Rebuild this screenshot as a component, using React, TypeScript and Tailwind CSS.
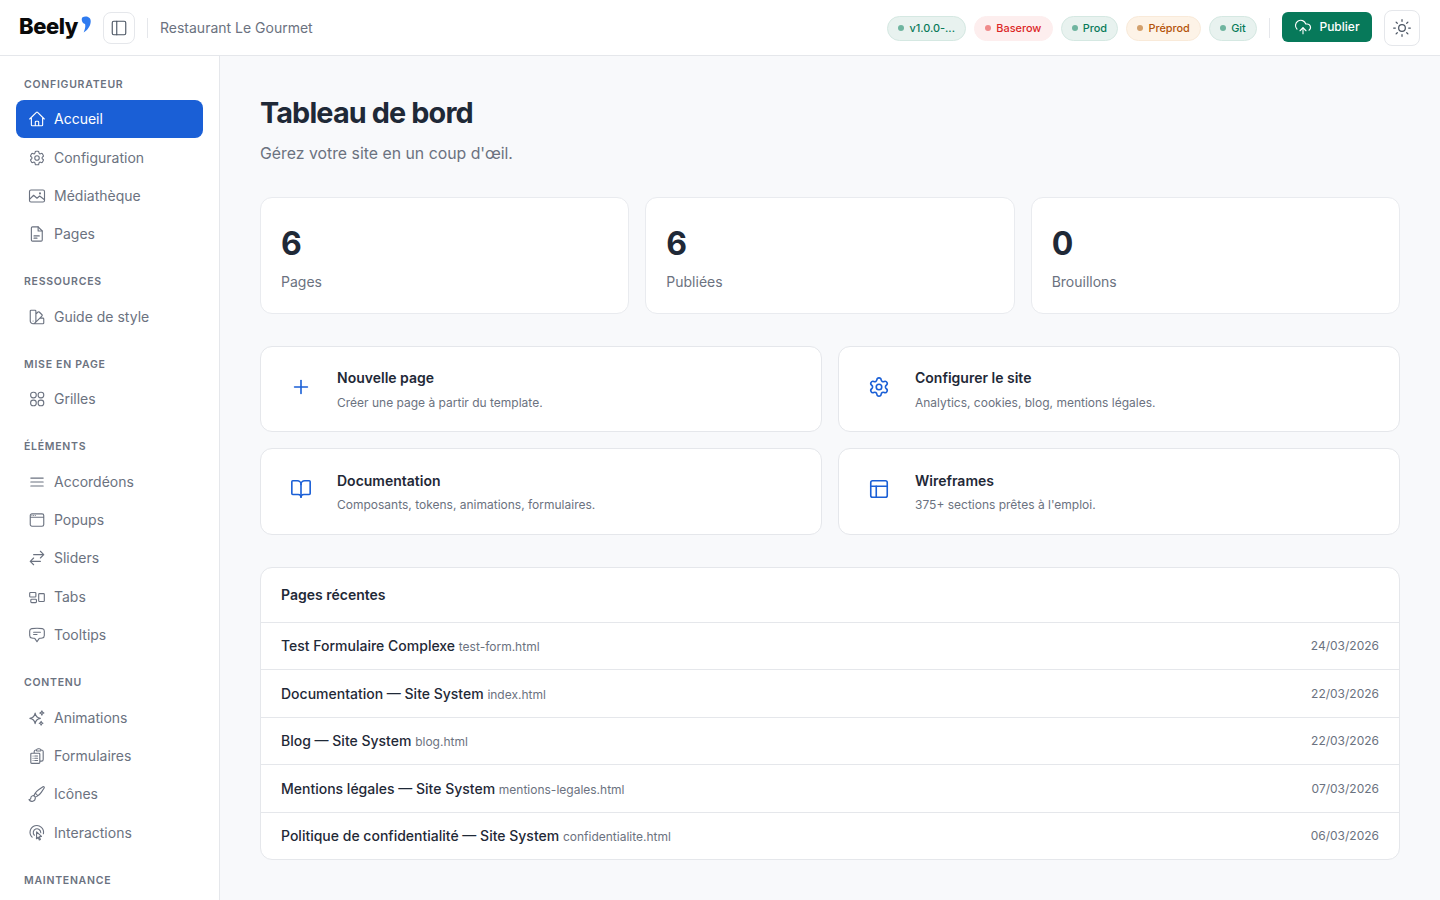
import type { ComponentType, ReactNode } from 'react'
import { BookOpen, CloudUpload, PanelLeft, PanelsTopLeft, Plus, Settings, Sun } from 'lucide-react'
import {
  HiOutlineArrowsRightLeft,
  HiOutlineBars3,
  HiOutlineChatBubbleBottomCenterText,
  HiOutlineClipboardDocumentList,
  HiOutlineCog6Tooth,
  HiOutlineHome,
  HiOutlinePaintBrush,
  HiOutlineRectangleGroup,
  HiOutlineSwatch,
  HiOutlineWindow,
} from 'react-icons/hi2'

type IconType = ComponentType<{ className?: string; strokeWidth?: number }>

const Stroke = ({ className, children }: { className?: string; children: ReactNode }) => (
  <svg viewBox="0 0 24 24" fill="none" stroke="currentColor" strokeWidth={1.5} strokeLinecap="round" strokeLinejoin="round" className={className}>
    {children}
  </svg>
)

const ImageIcon: IconType = ({ className }) => (
  <Stroke className={className}>
    <rect x="2" y="4" width="20" height="16" rx="2" />
    <path d="M2 16.5l5.5-5.5 4.5 4 3.5-3 6.5 5" />
    <circle cx="16" cy="8.5" r="0.6" />
  </Stroke>
)

const PageIcon: IconType = ({ className }) => (
  <Stroke className={className}>
    <path d="M6 2.5h7.5l5.5 5.5v12a1.5 1.5 0 0 1-1.5 1.5H6A1.5 1.5 0 0 1 4.5 20V4A1.5 1.5 0 0 1 6 2.5Z" />
    <path d="M13.5 2.5V8H19M8 14.5h7M8 17.5h4" />
  </Stroke>
)

const GridIcon: IconType = ({ className }) => (
  <Stroke className={className}>
    <rect x="3.5" y="3" width="7.5" height="7.5" rx="3.4" />
    <rect x="13.5" y="3" width="7.5" height="7.5" rx="3.4" />
    <rect x="3.5" y="13.5" width="7.5" height="7.5" rx="3.4" />
    <rect x="13.5" y="13.5" width="7.5" height="7.5" rx="3.4" />
  </Stroke>
)

const SparkIcon: IconType = ({ className }) => (
  <Stroke className={className}>
    <path d="M9.5 5.5C10.2 10 12 11.8 16.5 12.5 12 13.2 10.2 15 9.5 19.5 8.8 15 7 13.2 2.5 12.5 7 11.8 8.8 10 9.5 5.5Z" />
    <path d="M18.5 2.5c.3 1.8 1 2.5 2.8 2.8-1.8.3-2.5 1-2.8 2.8-.3-1.8-1-2.5-2.8-2.8 1.8-.3 2.5-1 2.8-2.8Z" />
    <path d="M17.5 16.5c.3 1.6.9 2.2 2.5 2.5-1.6.3-2.2.9-2.5 2.5-.3-1.6-.9-2.2-2.5-2.5 1.6-.3 2.2-.9 2.5-2.5Z" />
  </Stroke>
)

const TouchIcon: IconType = ({ className }) => (
  <Stroke className={className}>
    <path d="M5.5 17.5A9 9 0 1 1 20.5 13" />
    <path d="M8.5 15A5 5 0 1 1 17 11.5" />
    <path d="M11.5 10.5l6.5 6-3 .5 1.5 3.5-1.5.7-1.5-3.5-2.2 2Z" />
  </Stroke>
)

const navSections: { title: string; items: { label: string; icon: IconType; active?: boolean }[] }[] = [
  {
    title: 'Configurateur',
    items: [
      { label: 'Accueil', icon: HiOutlineHome, active: true },
      { label: 'Configuration', icon: HiOutlineCog6Tooth },
      { label: 'Médiathèque', icon: ImageIcon },
      { label: 'Pages', icon: PageIcon },
    ],
  },
  { title: 'Ressources', items: [{ label: 'Guide de style', icon: HiOutlineSwatch }] },
  { title: 'Mise en page', items: [{ label: 'Grilles', icon: GridIcon }] },
  {
    title: 'Éléments',
    items: [
      { label: 'Accordéons', icon: HiOutlineBars3 },
      { label: 'Popups', icon: HiOutlineWindow },
      { label: 'Sliders', icon: HiOutlineArrowsRightLeft },
      { label: 'Tabs', icon: HiOutlineRectangleGroup },
      { label: 'Tooltips', icon: HiOutlineChatBubbleBottomCenterText },
    ],
  },
  {
    title: 'Contenu',
    items: [
      { label: 'Animations', icon: SparkIcon },
      { label: 'Formulaires', icon: HiOutlineClipboardDocumentList },
      { label: 'Icônes', icon: HiOutlinePaintBrush },
      { label: 'Interactions', icon: TouchIcon },
    ],
  },
  { title: 'Maintenance', items: [] },
]

const stats = [
  { value: '6', label: 'Pages' },
  { value: '6', label: 'Publiées' },
  { value: '0', label: 'Brouillons' },
]

const actions: { title: string; text: string; icon: IconType }[] = [
  { title: 'Nouvelle page', text: 'Créer une page à partir du template.', icon: Plus },
  { title: 'Configurer le site', text: 'Analytics, cookies, blog, mentions légales.', icon: Settings },
  { title: 'Documentation', text: 'Composants, tokens, animations, formulaires.', icon: BookOpen },
  { title: 'Wireframes', text: "375+ sections prêtes à l'emploi.", icon: PanelsTopLeft },
]

const recent = [
  { title: 'Test Formulaire Complexe', file: 'test-form.html', date: '24/03/2026' },
  { title: 'Documentation — Site System', file: 'index.html', date: '22/03/2026' },
  { title: 'Blog — Site System', file: 'blog.html', date: '22/03/2026' },
  { title: 'Mentions légales — Site System', file: 'mentions-legales.html', date: '07/03/2026' },
  { title: 'Politique de confidentialité — Site System', file: 'confidentialite.html', date: '06/03/2026' },
]

const Badge = ({ tone, children }: { tone: 'green' | 'red' | 'amber'; children: ReactNode }) => {
  const tones = {
    green: 'bg-[#e8f2ef] border-[#d5e8e2] text-[#087a5a]',
    red: 'bg-[#fdeeee] border-[#fdeeee] text-[#dc2626]',
    amber: 'bg-[#fdf3e7] border-[#f9ead9] text-[#b45309]',
  }
  const dots = { green: 'bg-[#6fb5a0]', red: 'bg-[#f08a8a]', amber: 'bg-[#d3a06c]' }
  return (
    <span className={`flex h-[25px] items-center gap-[5px] rounded-full border px-[10.2px] text-[10.9px] font-medium ${tones[tone]}`}>
      <span className={`h-[6px] w-[6px] rounded-full ${dots[tone]}`} />
      {children}
    </span>
  )
}

const Header = () => (
  <header className="flex h-14 shrink-0 items-center justify-between border-b border-[#e5e7eb] bg-white pl-[19px] pr-5">
    <div className="flex items-center">
      <span className="flex w-[72px] items-center pb-[3px] text-[22px] font-extrabold leading-none tracking-[-0.02em] text-[#0a0a0a]">
        Beely
        <svg viewBox="0 0 10 18" className="mb-1 ml-[3px] h-[17px] w-[10px] shrink-0">
          <path d="M1 1.5C5 -.5 10 1 10 5.5 10 10.5 6.5 15 2.5 17.5 4.2 13.5 4.6 11 4 8.5 1.5 8.5 -.5 4 1 1.5Z" fill="#2f7bf0" />
        </svg>
      </span>
      <button className="ml-3 flex h-8 w-8 items-center justify-center rounded-lg border border-[#e5e7eb] text-[#4b5563]">
        <PanelLeft className="h-[18px] w-[18px]" strokeWidth={1.5} />
      </button>
      <span className="mx-3 h-5 w-px bg-[#e5e7eb]" />
      <span className="text-sm text-[#6b7280]">Restaurant Le Gourmet</span>
    </div>
    <div className="flex items-center">
      <div className="mt-px flex items-center gap-2">
        <Badge tone="green">v1.0.0-...</Badge>
        <Badge tone="red">Baserow</Badge>
        <Badge tone="green">Prod</Badge>
        <Badge tone="amber">Préprod</Badge>
        <Badge tone="green">Git</Badge>
      </div>
      <span className="mx-3 h-5 w-px bg-[#e5e7eb]" />
      <button className="flex h-[30px] w-[90px] -translate-y-px items-center justify-center gap-[7px] rounded-md bg-[#07795a] text-xs font-medium text-white">
        <CloudUpload className="h-[18px] w-[18px]" strokeWidth={1.5} />
        Publier
      </button>
      <button className="ml-3 flex h-9 w-9 items-center justify-center rounded-lg border border-[#e5e7eb] text-[#4b5563]">
        <Sun className="h-5 w-5" strokeWidth={1.5} />
      </button>
    </div>
  </header>
)

const Sidebar = () => (
  <aside className="w-[220px] shrink-0 overflow-hidden border-r border-[#e5e7eb] bg-white px-4 pt-[19.75px]">
    {navSections.map((section) => (
      <div key={section.title} className={`mb-5 ${section.title === 'Contenu' ? 'pt-[0.36px]' : ''}`}>
        <div className="mb-[8.4px] h-4 px-2 text-[10.5px] font-semibold uppercase leading-[18px] tracking-[0.07em] text-[#6b7280]">
          {section.title}
        </div>
        {section.items.map((item) => {
          const Icon = item.icon
          return (
            <div
              key={item.label}
              className={`flex h-[38.25px] items-center gap-2 rounded-lg pl-[12px] text-sm ${
                item.active ? 'bg-[#1a5fd6] text-white' : 'text-[#6b7280]'
              }`}>
              <Icon className="h-[18px] w-[18px] shrink-0" />
              {item.label}
            </div>
          )
        })}
      </div>
    ))}
  </aside>
)

const Dashboard = () => (
  <main className="flex-1 overflow-hidden bg-[#f8f9fb] px-10 pt-10">
    <h1 className="text-[28.8px] font-bold leading-[33px] tracking-[-0.03em] text-[#1f2937]">Tableau de bord</h1>
    <p className="mt-[13px] text-[15.84px] leading-6 text-[#6b7280]">Gérez votre site en un coup d'œil.</p>

    <div className="mt-[31px] grid grid-cols-3 gap-4">
      {stats.map((stat) => (
        <div key={stat.label} className="h-[117px] rounded-xl border border-[#e9ebef] bg-white px-5 pt-[26px]">
          <div className="text-[32px] font-bold leading-10 tracking-[-0.025em] text-[#1f2937]">{stat.value}</div>
          <div className="mt-2 text-sm leading-5 text-[#6b7280]">{stat.label}</div>
        </div>
      ))}
    </div>

    <div className="mt-8 grid grid-cols-2 gap-4">
      {actions.map((action) => {
        const Icon = action.icon
        return (
          <div key={action.title} className="flex h-[86.4px] items-start rounded-xl border border-[#e5e7eb] bg-white px-5 pt-5">
            <div className="flex h-10 w-10 shrink-0 items-center justify-center text-[#1a5fd6]">
              <Icon className="h-[22px] w-[22px]" strokeWidth={1.75} />
            </div>
            <div className="ml-4 pt-[1.2px]">
              <div className="text-sm font-semibold leading-5 text-[#1f2937]">{action.title}</div>
              <div className="mt-[4.8px] text-xs leading-5 text-[#6b7280]">{action.text}</div>
            </div>
          </div>
        )
      })}
    </div>

    <section className="mt-8 rounded-xl border border-[#e5e7eb] bg-white">
      <h2 className="flex h-[54px] items-center px-5 text-sm font-semibold text-[#1f2937]">Pages récentes</h2>
      {recent.map((page) => (
        <div key={page.file} className="flex h-[47.5px] items-center justify-between border-t border-[#e5e7eb] px-5">
          <div className="text-sm font-medium text-[#1f2937]">
            {page.title} <span className="text-xs font-normal text-[#6b7280]">{page.file}</span>
          </div>
          <span className="text-xs text-[#6b7280]">{page.date}</span>
        </div>
      ))}
    </section>
  </main>
)

export default function App() {
  return (
    <div className="flex h-screen flex-col overflow-hidden font-['Inter',sans-serif] antialiased">
      <Header />
      <div className="flex min-h-0 flex-1">
        <Sidebar />
        <Dashboard />
      </div>
    </div>
  )
}
